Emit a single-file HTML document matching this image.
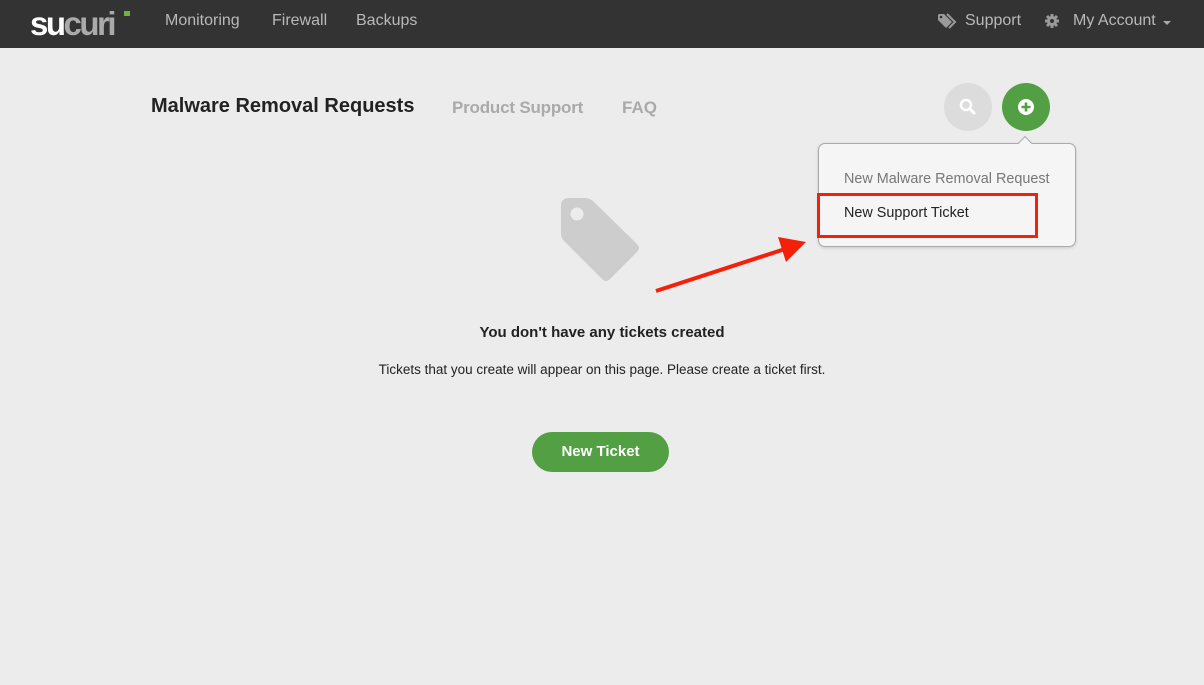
<!DOCTYPE html>
<html><head><meta charset="utf-8">
<style>
*{margin:0;padding:0;box-sizing:border-box}
body{width:1204px;height:685px;background:#ececec;font-family:"Liberation Sans",sans-serif;position:relative;overflow:hidden}
.top{position:absolute;left:0;top:0;width:1204px;height:48px;background:#333}
.nav{position:absolute;top:12px;font-size:16px;color:#b9b9b9}
.logo{position:absolute;left:30px;top:5px;font-weight:bold;font-size:33px;letter-spacing:-2.5px;font-family:"Liberation Sans",sans-serif}
.abs{position:absolute}
</style></head><body>
<div class="top">
  <div class="logo"><span style="color:#fff">su</span><span style="color:#aaa">curi</span></div>
  <div class="abs" style="left:124px;top:11px;width:6px;height:5px;background:#6db33f"></div>
  <div class="nav" style="left:165px">Monitoring</div>
  <div class="nav" style="left:272px">Firewall</div>
  <div class="nav" style="left:356px">Backups</div>
  <svg class="abs" style="left:937px;top:13px" width="20" height="18" viewBox="0 0 20 18"><path d="M1 2 L1 7 L9 15 L15 9 L7 1 L2 1Z" fill="#9a9a9a"/><path d="M10 1 L18 9 L12 15" stroke="#9a9a9a" stroke-width="2" fill="none"/><circle cx="4" cy="4" r="1.3" fill="#333"/></svg>
  <div class="nav" style="left:965px">Support</div>
  <svg class="abs" style="left:1044px;top:13px" width="16" height="16" viewBox="0 0 16 16"><circle cx="8" cy="8" r="5" fill="#9a9a9a"/><g stroke="#9a9a9a" stroke-width="3"><line x1="8" y1="1" x2="8" y2="15"/><line x1="1" y1="8" x2="15" y2="8"/><line x1="3" y1="3" x2="13" y2="13"/><line x1="13" y1="3" x2="3" y2="13"/></g><circle cx="8" cy="8" r="2" fill="#333"/></svg>
  <div class="nav" style="left:1073px">My Account</div>
  <div class="abs" style="left:1163px;top:21px;border-left:4px solid transparent;border-right:4px solid transparent;border-top:4px solid #aaa"></div>
</div>

<div class="abs" style="left:151px;top:95px;font-size:20px;font-weight:bold;color:#222">Malware Removal Requests</div>
<div class="abs" style="left:452px;top:98px;font-size:17px;font-weight:bold;color:#aaa;letter-spacing:-0.2px">Product Support</div>
<div class="abs" style="left:622px;top:98px;font-size:17px;font-weight:bold;color:#aaa">FAQ</div>

<div class="abs" style="left:944px;top:83px;width:48px;height:48px;border-radius:50%;background:#dcdcdc"></div>
<svg class="abs" style="left:958px;top:97px" width="20" height="20" viewBox="0 0 20 20"><circle cx="8" cy="8" r="5" stroke="#fff" stroke-width="2.5" fill="none"/><line x1="12" y1="12" x2="16" y2="16" stroke="#fff" stroke-width="3" stroke-linecap="round"/></svg>
<div class="abs" style="left:1002px;top:83px;width:48px;height:48px;border-radius:50%;background:#52a043"></div>
<svg class="abs" style="left:1017px;top:98px" width="18" height="18" viewBox="0 0 18 18"><circle cx="9" cy="9" r="8" fill="#fff"/><path d="M9 4.5V13.5M4.5 9H13.5" stroke="#52a043" stroke-width="2.6"/></svg>

<div class="abs" style="left:818px;top:143px;width:258px;height:104px;background:#f5f5f5;border:1px solid #aaa;border-radius:7px;box-shadow:0 1px 3px rgba(0,0,0,.15)"></div>
<div class="abs" style="left:1020px;top:138px;width:10px;height:10px;background:#f5f5f5;border-left:1px solid #aaa;border-top:1px solid #aaa;transform:rotate(45deg)"></div>
<div class="abs" style="left:844px;top:171px;font-size:14.4px;color:#777">New Malware Removal Request</div>
<div class="abs" style="left:844px;top:205px;font-size:14.4px;color:#222">New Support Ticket</div>
<div class="abs" style="left:817px;top:193px;width:221px;height:45px;border:3px solid #f4200a"></div>

<svg class="abs" style="left:555px;top:192px" width="95" height="95" viewBox="0 0 95 95">
<path d="M14 6 L30 6 Q35 6 39 10 L82 52 Q86 56 82 60 L55 87 Q51 91 47 87 L9 49 Q6 46 6 41 L6 14 Q6 6 14 6Z" fill="#cdcdcd"/>
<circle cx="22" cy="22" r="6.5" fill="#ececec"/></svg>

<svg class="abs" style="left:0;top:0" width="1204" height="685"><line x1="656" y1="291" x2="785" y2="249" stroke="#f4200a" stroke-width="4"/><polygon points="806,242 778,237 786,262" fill="#f4200a"/></svg>

<div class="abs" style="left:0;width:1204px;top:324px;text-align:center;font-size:15px;font-weight:bold;color:#222">You don't have any tickets created</div>
<div class="abs" style="left:0;width:1204px;top:362px;text-align:center;font-size:13.5px;color:#222">Tickets that you create will appear on this page. Please create a ticket first.</div>
<div class="abs" style="left:532px;top:432px;width:137px;height:40px;border-radius:20px;background:#52a043;color:#fff;font-size:15px;font-weight:bold;text-align:center;line-height:40px">New Ticket</div>
</body></html>
